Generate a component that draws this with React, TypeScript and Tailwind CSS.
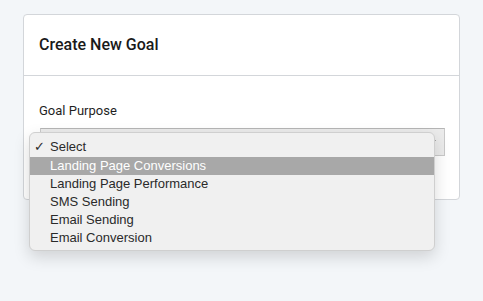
import { ChevronDown } from "lucide-react";

const options = [
  "Landing Page Conversions",
  "Landing Page Performance",
  "SMS Sending",
  "Email Sending",
  "Email Conversion",
];

const App = () => {
  return (
    <div className="w-full h-[301px] bg-[#f3f6f9] pl-[23px] pt-[14px] font-['Roboto',sans-serif]">
      <div className="w-[437px] h-[186px] bg-white border border-[#d3d6da] rounded-[4px]">
        <div className="h-[61px] border-b border-[#d3d6da] flex items-center pl-[15px]">
          <h2 className="text-[16px] font-medium text-[#1a1a1a]">Create New Goal</h2>
        </div>
        <div className="px-[15px] pt-[27px]">
          <p className="text-[13px] text-[#1f1f1f] leading-[16px]">Goal Purpose</p>
          <div className="relative mt-[9px]">
            <div className="h-[28px] w-[405px] ml-[1px] bg-[#ebebeb] border border-[#c9c9c9] border-t-[#b5b5b5] flex items-center justify-end pr-[6px]">
              <ChevronDown className="w-3 h-3 text-[#333]" />
            </div>
            <div className="absolute left-[-10px] top-[4px] w-[406px] h-[119px] bg-[#f0f0f0] rounded-[6px] border border-[#cfcfcf] shadow-[0_6px_16px_rgba(0,0,0,0.15)] pt-[3px] font-['Liberation_Sans',sans-serif] text-[13px] text-[#2a2a2a] z-10">
              <div className="h-[21px] flex items-center">
                <span className="w-[20px] pl-[4px]">✓</span>
                <span>Select</span>
              </div>
              {options.map((o, i) => (
                <div
                  key={o}
                  className={
                    i === 0
                      ? "h-[18px] flex items-center pl-[20px] bg-[#a8a8a8] text-white"
                      : "h-[18px] flex items-center pl-[20px]"
                  }
                >
                  {o}
                </div>
              ))}
            </div>
          </div>
        </div>
      </div>
    </div>
  );
};

export default App;
